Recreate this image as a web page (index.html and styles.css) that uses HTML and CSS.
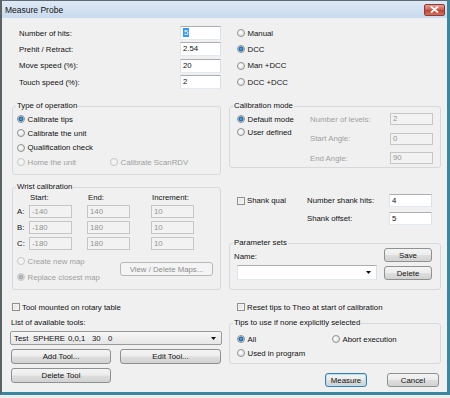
FILE: index.html
```html
<!DOCTYPE html>
<html lang="en">
<head>
    <meta charset="UTF-8">
    <meta name="viewport" content="width=device-width, initial-scale=1.0">
    <title>Measure Probe</title>
    <link rel="stylesheet" href="styles.css">
</head>
<body>
<div class="window">
    <div class="titlebar">
        <span class="title">Measure Probe</span>
        <span class="close">
            <svg width="9" height="7" viewBox="0 0 9 7"><path d="M1.5 1 L7.5 6 M7.5 1 L1.5 6" stroke="#fff" stroke-width="1.8" stroke-linecap="round"/></svg>
        </span>
    </div>
    <div class="content">

        <div class="row">
            <div class="fields">
                <div class="field"><span>Number of hits:</span><div class="edit"><span class="sel">5</span></div></div>
                <div class="field"><span>Prehit / Retract:</span><div class="edit">2.54</div></div>
                <div class="field"><span>Move speed (%):</span><div class="edit">20</div></div>
                <div class="field"><span>Touch speed (%):</span><div class="edit">2</div></div>
            </div>
            <div class="machine">
                <div class="opt"><span class="radio"></span>Manual</div>
                <div class="opt"><span class="radio on"></span>DCC</div>
                <div class="opt"><span class="radio"></span>Man +DCC</div>
                <div class="opt"><span class="radio"></span>DCC +DCC</div>
            </div>
        </div>

        <div class="row groups">
            <fieldset class="group left">
                <legend>Type of operation</legend>
                <div class="op-list">
                    <div class="opt"><span class="radio on"></span>Calibrate tips</div>
                    <div class="opt"><span class="radio"></span>Calibrate the unit</div>
                    <div class="opt"><span class="radio"></span>Qualification check</div>
                    <div class="opt off">
                        <span class="home"><span class="radio"></span>Home the unit</span>
                        <span class="radio"></span>Calibrate ScanRDV
                    </div>
                </div>
            </fieldset>
            <fieldset class="group">
                <legend>Calibration mode</legend>
                <div class="calmode">
                    <div class="modes">
                        <div class="opt"><span class="radio on"></span>Default mode</div>
                        <div class="opt"><span class="radio"></span>User defined</div>
                    </div>
                    <div class="levels">
                        <span class="off">Number of levels:</span><div class="edit small dis">2</div>
                        <span class="off">Start Angle:</span><div class="edit small dis">0</div>
                        <span class="off">End Angle:</span><div class="edit small dis">90</div>
                    </div>
                </div>
            </fieldset>
        </div>

        <div class="row wrist-row">
            <fieldset class="group left">
                <legend>Wrist calibration</legend>
                <div class="wrist">
                    <span></span><span class="head">Start:</span><span class="head">End:</span><span class="head">Increment:</span>
                    <span class="axis">A:</span><div class="edit dis">-140</div><div class="edit dis">140</div><div class="edit dis">10</div>
                    <span class="axis">B:</span><div class="edit dis">-180</div><div class="edit dis">180</div><div class="edit dis">10</div>
                    <span class="axis">C:</span><div class="edit dis">-180</div><div class="edit dis">180</div><div class="edit dis">10</div>
                </div>
                <div class="maps">
                    <div class="maps-opts">
                        <div class="opt off"><span class="radio"></span>Create new map</div>
                        <div class="opt off"><span class="radio dot"></span>Replace closest map</div>
                    </div>
                    <div class="btn dis maps-btn">View / Delete Maps...</div>
                </div>
            </fieldset>
            <div>
                <div class="shank">
                    <div class="opt"><span class="check"></span>Shank qual</div>
                    <span>Number shank hits:</span><div class="edit">4</div>
                    <span></span>
                    <span>Shank offset:</span><div class="edit">5</div>
                </div>
                <fieldset class="group params">
                    <legend>Parameter sets</legend>
                    <div class="param-grid">
                        <span class="name">Name:</span>
                        <div class="btn">Save</div>
                        <div class="combo white"><span></span><svg width="5" height="3" viewBox="0 0 5 3"><path d="M0 0 H5 L2.5 3 Z" fill="#111"/></svg></div>
                        <div class="btn">Delete</div>
                    </div>
                </fieldset>
            </div>
        </div>

        <div class="row tools-row">
            <div>
                <div class="opt check-row"><span class="check"></span>Tool mounted on rotary table</div>
                <div class="list-label">List of available tools:</div>
                <div class="combo">
                    <span class="tools"><span class="t1">Test</span><span class="t2">SPHERE</span><span class="t3">0,0,1</span><span class="t4">30</span><span>0</span></span>
                    <svg width="5" height="3" viewBox="0 0 5 3"><path d="M0 0 H5 L2.5 3 Z" fill="#111"/></svg>
                </div>
                <div class="tool-btns">
                    <div class="btn">Add Tool...</div>
                    <div class="btn">Edit Tool...</div>
                    <div class="btn">Delete Tool</div>
                </div>
            </div>
            <div>
                <div class="opt reset"><span class="check"></span>Reset tips to Theo at start of calibration</div>
                <fieldset class="group tips">
                    <legend>Tips to use if none explicitly selected</legend>
                    <div class="tips-grid">
                        <div class="opt"><span class="radio on"></span>All</div>
                        <div class="opt"><span class="radio"></span>Abort execution</div>
                        <div class="opt"><span class="radio"></span>Used in program</div>
                    </div>
                </fieldset>
                <div class="actions">
                    <div class="btn default measure">Measure</div>
                    <div class="btn cancel">Cancel</div>
                </div>
            </div>
        </div>

    </div>
</div>
</body>
</html>
```

FILE: styles.css
```css
html, body {
    margin: 0;
    padding: 0;
    background: #e9eef1;
}
body {
    font-family: "Liberation Sans", Arial, sans-serif;
    font-size: 7.8px;
    color: #111;
}
.window {
    width: 450px;
    height: 395px;
    box-sizing: border-box;
    border-top: 1px solid #5e6b74;
    border-left: 2px solid #5b6266;
    border-right: 3px solid #3a889f;
    border-bottom: 3px solid #3a889f;
    background: #f0f0f0;
    display: flex;
    flex-direction: column;
}
.titlebar {
    height: 17px;
    flex: none;
    display: flex;
    align-items: center;
    justify-content: space-between;
    background: linear-gradient(#dfe9f5, #c9daee);
    padding-left: 3px;
}
.title {
    font-size: 8.5px;
    color: #111;
}
.close {
    width: 21px;
    height: 12px;
    box-sizing: border-box;
    margin-right: 2px;
    border: 1px solid #8a3b34;
    border-radius: 2px;
    background: linear-gradient(#e4a195, #cf5a4a 50%, #c0402f 51%, #d4705e);
    display: flex;
    align-items: center;
    justify-content: center;
}
.content {
    padding: 7px 6px 0 8px;
}
.row {
    display: grid;
    grid-template-columns: 212px 212px;
    column-gap: 7px;
    align-items: start;
}

/* generic controls */
.opt {
    display: flex;
    align-items: center;
    white-space: nowrap;
}
.off {
    color: #9f9f9f;
}
.radio {
    width: 8px;
    height: 8px;
    box-sizing: border-box;
    flex: none;
    border-radius: 50%;
    border: 1px solid #8d9094;
    background: radial-gradient(circle at 40% 40%, #ffffff 0, #e2e3e5 70%);
    margin-right: 2.5px;
}
.radio.on {
    background: radial-gradient(circle, #6fc0ee 0, #1c63a6 1.8px, #2b77b6 2.3px, #e8eaec 2.8px);
}
.radio.dot {
    background: radial-gradient(circle, #c9c9c9 0, #a9a9a9 2.2px, #ececec 2.8px);
}
.off .radio {
    border-color: #c4c6c8;
    background: #f3f3f3;
}
.off .radio.dot {
    background: radial-gradient(circle, #c3c3c3 0, #a7a7a7 2.2px, #eeeeee 2.8px);
}
.check {
    width: 8px;
    height: 8px;
    box-sizing: border-box;
    flex: none;
    border: 1px solid #8e8f8f;
    background: linear-gradient(135deg, #dcdcdc, #fbfbfb);
    box-shadow: inset 0 0 0 1px #f4f4f4;
    margin-right: 2px;
}
.edit {
    height: 14px;
    box-sizing: border-box;
    border: 1px solid;
    border-color: #abadb3 #dbdfe6 #e3e9ef #e2e3ea;
    background: #fff;
    padding-left: 2px;
    line-height: 12px;
    white-space: nowrap;
}
.edit.small {
    height: 12px;
    line-height: 10px;
}
.edit.dis {
    background: #f2f2f2;
    border-color: #c6c6c6;
    color: #929292;
}
.sel {
    background: #3399ff;
    color: #fff;
    padding: 0 1px;
}
.btn {
    height: 15px;
    box-sizing: border-box;
    border: 1px solid #8f9092;
    border-radius: 3px;
    background: linear-gradient(#f4f4f4, #ececec 48%, #dedede 52%, #d2d2d2);
    display: flex;
    align-items: center;
    justify-content: center;
    white-space: nowrap;
}
.btn.dis {
    border-color: #b5b9bc;
    background: #f4f4f4;
    color: #8c8c8c;
}
.btn.default {
    border-color: #3c7fb1;
    box-shadow: inset 0 0 0 1px #b6e0f6;
}
.combo {
    height: 14px;
    box-sizing: border-box;
    border: 1px solid #9a9a9a;
    border-radius: 2px;
    background: linear-gradient(#f6f6f6, #e6e6e6);
    display: flex;
    align-items: center;
    justify-content: space-between;
    padding: 0 5px 0 3px;
}
.combo.white {
    height: 15px;
    border-radius: 0;
    border-color: #abadb3 #dbdfe6 #e3e9ef #e2e3ea;
    background: #fff;
}

/* group boxes */
.group {
    margin: 0;
    padding: 0;
    min-width: 0;
    border: 1px solid #d5d9dc;
    border-radius: 3px;
}
.group legend {
    margin-left: 3px;
    padding: 0 1px;
    line-height: 10px;
}
.group.left {
    margin: 0 1px 0 2px;
}

/* top fields */
.field {
    display: grid;
    grid-template-columns: 1fr 41px;
    align-items: center;
    height: 16.33px;
    padding: 0 1px 0 9px;
}
.machine .opt {
    height: 16.33px;
    padding-left: 8px;
}

/* operation / calibration mode */
.groups {
    margin-top: 10.7px;
}
.op-list {
    padding: 1px 0 5px 4px;
}
.op-list .opt {
    height: 14.33px;
}
.home {
    display: flex;
    align-items: center;
    width: 93px;
}
.calmode {
    display: flex;
    padding: 0 0 3px 7px;
}
.modes {
    width: 73px;
    padding-top: 1.5px;
}
.modes .opt {
    height: 13px;
}
.levels {
    display: grid;
    grid-template-columns: 80px 43px;
    row-gap: 7.5px;
    align-items: center;
    margin-top: 2px;
}

/* wrist calibration */
.wrist-row {
    margin-top: 7px;
}
.wrist {
    display: grid;
    grid-template-columns: 12px 58px 64px 43px;
    grid-template-rows: 10px 13px 13px 13px;
    row-gap: 3px;
    align-items: center;
    padding-left: 4px;
}
.wrist .edit {
    width: 43px;
    height: 13px;
    line-height: 11px;
}
.head {
    padding-left: 1px;
}
.maps {
    display: flex;
    align-items: center;
    margin-top: 3px;
    padding: 0 0 4px 4px;
}
.maps-opts {
    width: 103px;
}
.maps-opts .opt {
    height: 16px;
}
.maps-btn {
    width: 93px;
    height: 14px;
}

/* shank + parameter sets */
.shank {
    display: grid;
    grid-template-columns: 70px 82px 43px;
    grid-template-rows: 13px 13px;
    row-gap: 5px;
    align-items: center;
    margin-top: 12px;
    padding-left: 8px;
}
.shank .edit {
    height: 13px;
    line-height: 11px;
}
.params {
    margin-top: 13px;
}
.param-grid {
    display: grid;
    grid-template-columns: 140px 48px;
    grid-template-rows: 14px 15px;
    column-gap: 7px;
    row-gap: 3px;
    padding: 0 0 9px 7px;
}
.param-grid .name {
    align-self: end;
    line-height: 10px;
    margin-left: -3px;
}
.param-grid .btn {
    height: 14px;
    align-self: end;
}

/* tools + tips */
.tools-row {
    margin-top: 12px;
}
.check-row {
    height: 10px;
    padding-left: 2px;
}
.list-label {
    margin-top: 6px;
    line-height: 10px;
    padding-left: 1px;
}
.tools-row .combo {
    margin-top: 3px;
}
.tools {
    display: flex;
    white-space: nowrap;
}
.t1 { width: 19px; }
.t2 { width: 35px; }
.t3 { width: 24px; }
.t4 { width: 16px; }
.tool-btns {
    display: grid;
    grid-template-columns: 100px 101px;
    column-gap: 9px;
    row-gap: 4px;
    margin-top: 4px;
    padding-left: 1px;
}
.reset {
    height: 10px;
    padding-left: 8px;
}
.tips {
    margin-top: 6px;
}
.tips-grid {
    display: grid;
    grid-template-columns: 95px auto;
    grid-auto-rows: 14px;
    padding: 4px 0 3px 7px;
}
.actions {
    display: flex;
    justify-content: flex-end;
    gap: 20px;
    margin-top: 9px;
    padding-right: 2px;
}
.actions .btn {
    height: 14px;
}
.measure {
    width: 42px;
}
.cancel {
    width: 52px;
}
```
